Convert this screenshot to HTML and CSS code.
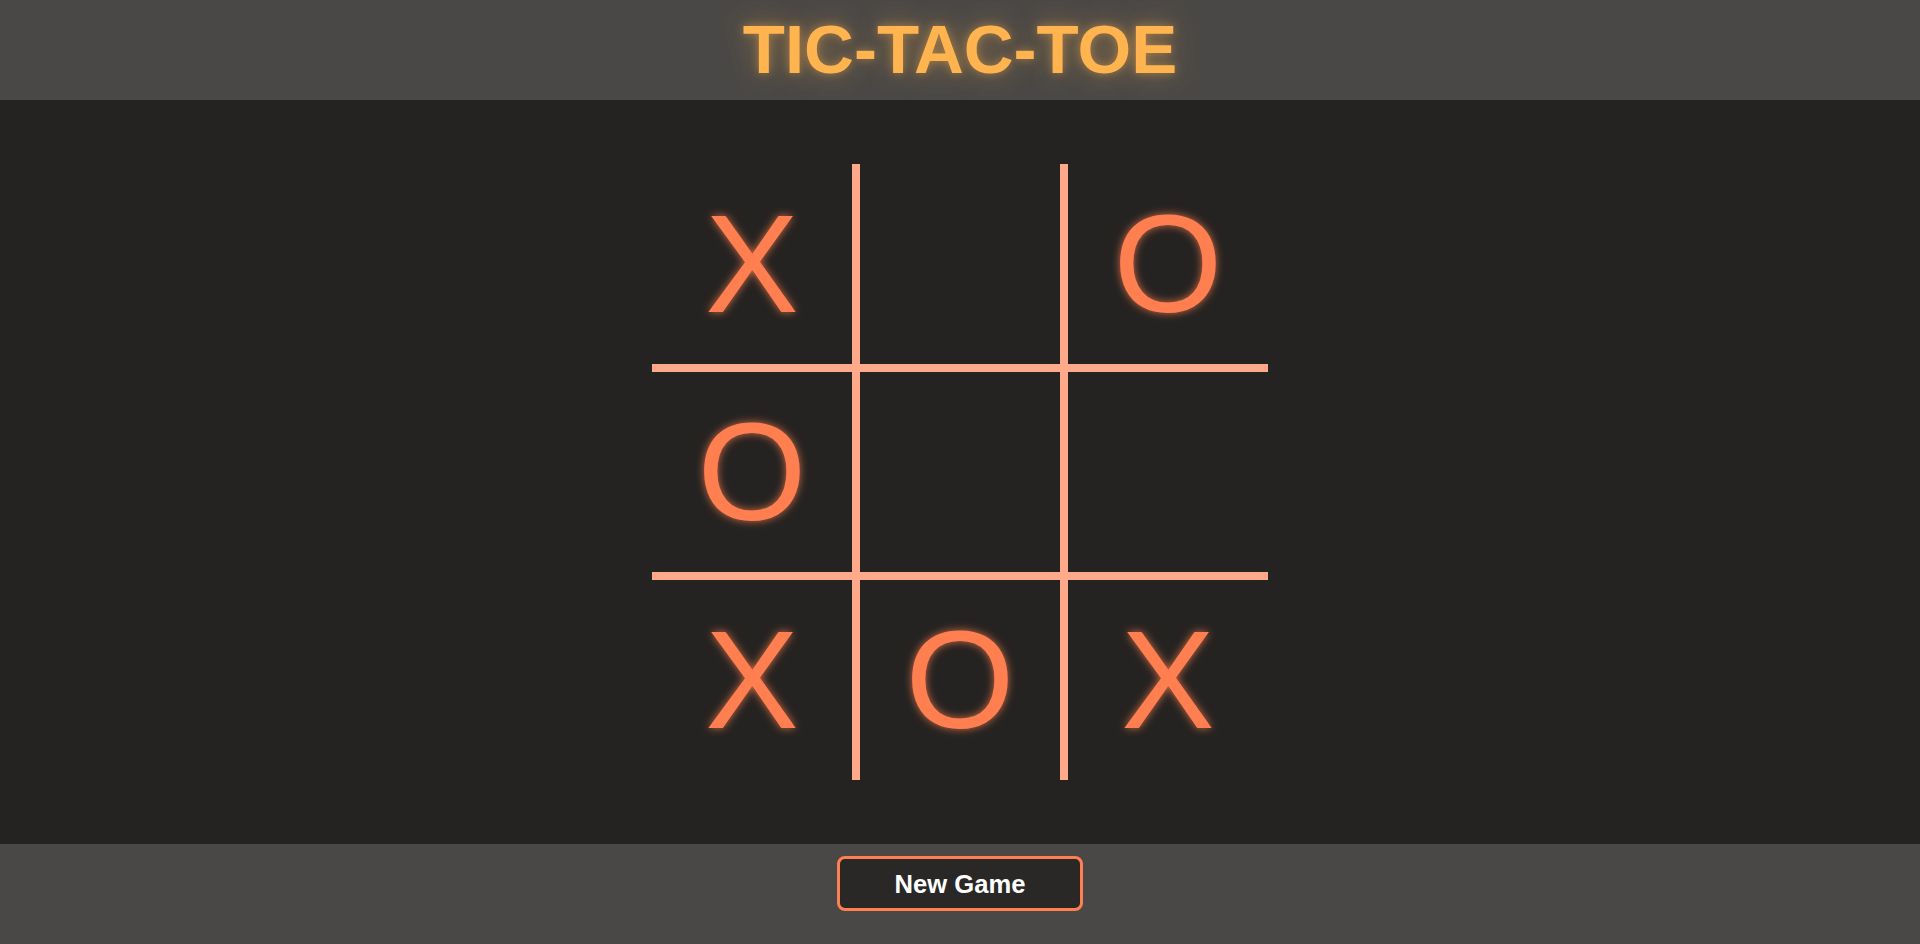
FILE: index.html
```html
<!DOCTYPE html>
<html lang="en">
<head>
<meta charset="utf-8">
<title>Tic-Tac-Toe</title>
<link rel="stylesheet" href="styles.css">
</head>
<body>
<div class="app">
  <header class="header">
    <h1 class="title">TIC-TAC-TOE</h1>
  </header>
  <main class="main">
    <div class="board">
      <div class="cell">X</div>
      <div class="cell"></div>
      <div class="cell">O</div>
      <div class="cell">O</div>
      <div class="cell"></div>
      <div class="cell"></div>
      <div class="cell">X</div>
      <div class="cell">O</div>
      <div class="cell">X</div>
    </div>
  </main>
  <footer class="footer">
    <button class="new-game">New Game</button>
  </footer>
</div>
</body>
</html>
```

FILE: styles.css
```css
html, body {
  margin: 0;
  padding: 0;
  height: 100%;
}

body {
  font-family: "Liberation Sans", Arial, sans-serif;
  background: #252321;
}

.app {
  display: flex;
  flex-direction: column;
  height: 100vh;
}

.header {
  height: 100px;
  flex: 0 0 100px;
  background: #4a4846;
  display: flex;
  justify-content: center;
  align-items: flex-start;
}

.title {
  margin: 0;
  font-size: 69px;
  line-height: 100px;
  font-weight: bold;
  color: #ffb44f;
  text-shadow: 0 0 10px rgba(255, 180, 79, 0.45), 0 0 28px rgba(255, 180, 79, 0.4);
}

.main {
  flex: 1 1 auto;
  background: #252321;
  display: flex;
  justify-content: center;
  align-items: center;
}

.board {
  display: grid;
  grid-template-columns: repeat(3, 200px);
  grid-template-rows: repeat(3, 200px);
  gap: 8px;
  background: #ffa88a;
}

.cell {
  background: #252321;
  color: #ff7f50;
  font-size: 140px;
  line-height: 200px;
  text-align: center;
  text-shadow: 0 0 8px rgba(255, 127, 80, 0.8);
}

.footer {
  height: 100px;
  flex: 0 0 100px;
  background: #4a4846;
  display: flex;
  justify-content: center;
  align-items: flex-start;
}

.new-game {
  margin-top: 12px;
  width: 246px;
  height: 55px;
  padding: 2px 0 0;
  border: 3px solid #ff7f50;
  border-radius: 8px;
  background: #2a2826;
  color: #ffffff;
  font-family: "Liberation Sans", Arial, sans-serif;
  font-weight: bold;
  font-size: 25.6px;
  cursor: pointer;
}
```
